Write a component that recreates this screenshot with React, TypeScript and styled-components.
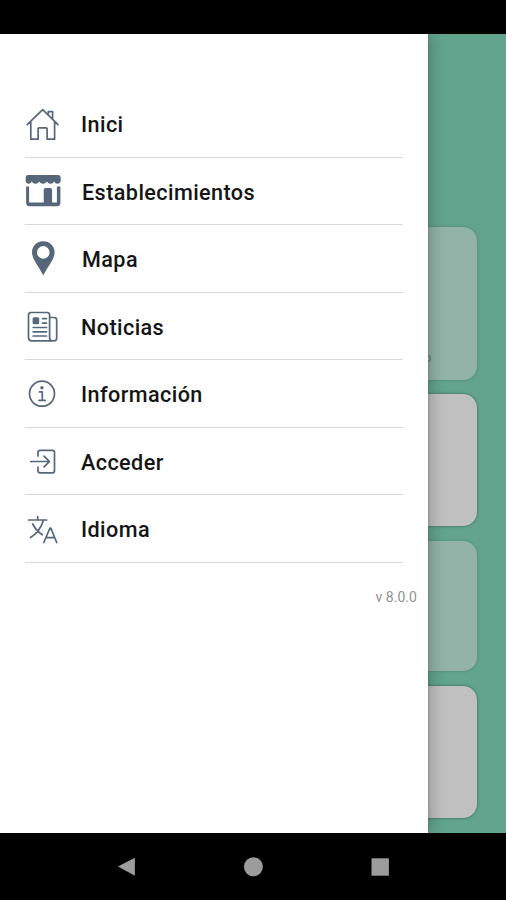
import React from 'react';
import styled, { createGlobalStyle } from 'styled-components';

const Global = createGlobalStyle`
  *, *::before, *::after { box-sizing: border-box; }
  body { margin: 0; background: #000; font-family: Roboto, sans-serif; }
`;

const Screen = styled.div`
  display: flex;
  flex-direction: column;
  width: 506px;
  height: 900px;
  overflow: hidden;
  background: #000;
`;

const StatusBar = styled.header`
  height: 34px;
  flex: none;
  background: #000;
`;

const Body = styled.div`
  display: flex;
  flex: none;
  height: 799px;
  background: #63a48e;
  overflow: hidden;
`;

const Drawer = styled.aside`
  position: relative;
  z-index: 1;
  display: flex;
  flex-direction: column;
  flex: none;
  width: 428px;
  padding: 56.25px 25px 0;
  background: #fff;
  box-shadow: 0 0 17px rgba(0, 0, 0, 0.32), 0 0 2px rgba(0, 0, 0, 0.2);
`;

const Menu = styled.nav`
  display: flex;
  flex-direction: column;
  width: 378px;
`;

const MenuItem = styled.a`
  display: flex;
  align-items: center;
  height: 67.5px;
  border-bottom: 1px solid #d9d9d9;
  color: #151515;
`;

const Icon = styled.svg`
  display: block;
  flex: none;
  width: 36px;
  height: 36px;
  color: #56677b;
  fill: none;
  stroke: currentColor;
  stroke-width: 1.7;
  stroke-linecap: round;
  stroke-linejoin: round;
`;

const Label = styled.span<{ $indent: number }>`
  margin-left: ${(p) => p.$indent}px;
  padding-top: 3px;
  font-size: 21.6px;
  font-weight: 500;
  line-height: 26px;
  letter-spacing: 0.42px;
  white-space: nowrap;
`;

const Version = styled.div`
  align-self: flex-end;
  margin: 25px -14px 0 0;
  color: #929292;
  font-size: 14px;
  line-height: 18px;
  letter-spacing: 0.05px;
`;

const Backdrop = styled.main`
  display: flex;
  flex-direction: column;
  flex: 1;
  padding: 193px 29px 0 0;
`;

const Card = styled.section<{ $height: number; $gap: number; $muted?: boolean }>`
  display: flex;
  align-items: flex-end;
  flex: none;
  height: ${(p) => p.$height}px;
  margin-bottom: ${(p) => p.$gap}px;
  padding-bottom: 14px;
  border-radius: 0 14px 14px 0;
  background: ${(p) => (p.$muted ? '#93b3a8' : '#c0c0c0')};
  box-shadow: 0 0 3px ${(p) => (p.$muted ? 'rgba(0,55,35,.28)' : 'rgba(0,45,30,.55)')};
`;

const CardText = styled.span`
  margin-left: -4px;
  color: #6d7b77;
  font-size: 13px;
  line-height: 16px;
`;

const NavBar = styled.footer`
  display: flex;
  align-items: center;
  justify-content: space-between;
  flex: none;
  height: 67px;
  padding: 0 116px;
`;

const NavIcon = styled.svg`
  display: block;
  width: 20px;
  height: 20px;
  fill: #9c9c9c;
`;

const HomeIcon = () => (
  <Icon viewBox="0 0 36 36">
    <path d="M2.2 18.7 17.7 3.7 33 18.7M5.8 16v17.2h7.3V22.8q0-1 1-1h7q1 0 1 1v10.4h7.5V16M23.3 9V5.6h4.3v7.5" />
  </Icon>
);

const StoreIcon = () => (
  <Icon viewBox="0 0 36 36">
    <path
      d="M3 2h30q2.7 0 2.7 3v3.4q-1 2.4-3.3 2.4t-3.2-2.2q-1.3 2.2-3.7 2.2T21.8 8.6q-1.4 2.2-3.8 2.2t-3.8-2.2q-1.3 2.2-3.7 2.2T6.8 8.6Q5.7 10.8 3.6 10.8T.7 8.4V5Q.7 2 3 2Z"
      fill="currentColor"
      stroke="none"
    />
    <path
      d="M1.1 13.4h3v16.1h14.6V17q0-2 2-2h4.4q2 0 2 2v12.5h4.8V13.4h3.5v16.2q0 3.7-3.3 3.7H4.3q-3.2 0-3.2-3.7Z"
      fill="currentColor"
      stroke="none"
    />
  </Icon>
);

const PinIcon = () => (
  <Icon viewBox="0 0 36 36">
    <path
      fillRule="evenodd"
      d="M18.3.2c6.4 0 11.3 4.8 11.3 11 0 7.3-7 14.3-11.3 23.2C14 25.5 7 18.5 7 11.2 7 5 11.9.2 18.3.2Zm0 4.9a6.3 6.3 0 1 0 0 12.6 6.3 6.3 0 0 0 0-12.6Z"
      fill="currentColor"
      stroke="none"
    />
  </Icon>
);

const NewsIcon = () => (
  <Icon viewBox="0 0 36 36">
    <path d="M24.6 9.5h4.6q2.5 0 2.5 2.5v18.2a2.6 2.6 0 0 1-2.6 2.6H6.5q-3 0-3-3V7q0-2.500 2.500-2.500h16q2.600 0 2.600 2.500v22.500q0 3 2.300 3.300" />
    <path d="M17.5 10.600h4M17.5 15.200h4M8.200 19.500h13.300M8.200 23.900h13.300M8.200 28h13.300" />
    <rect x="7.6" y="9.2" width="6.6" height="7" rx="1.5" fill="currentColor" stroke="none" />
  </Icon>
);

const InfoIcon = () => (
  <Icon viewBox="0 0 36 36">
    <circle cx="17" cy="17.7" r="12.5" />
    <circle cx="16.9" cy="11.8" r="1.7" fill="currentColor" stroke="none" />
    <path d="M14.5 15.9h2.8v8.4M14 24.4h6.2" />
  </Icon>
);

const LoginIcon = () => (
  <Icon viewBox="0 0 36 36">
    <path d="M13 13V9.300q0-2 2-2h12.500q2 0 2 2v18.500q0 2-2 2H15q-2 0-2-2V24M5.700 18.500h18.700M19 13.100l5.500 5.400-5.500 5.400" />
  </Icon>
);

const LanguageIcon = () => (
  <Icon viewBox="0 0 36 36">
    <path d="M3.700 9h18M12.700 5.600V9M18.300 9.500C16.100 17 11.500 22.800 5.500 26.500M7.700 13c2.300 4.500 5.600 8.200 9.600 10.800M18.800 31.500 25 17h.8l5.900 14.500M21 26.700h8.700" />
  </Icon>
);

const items = [
  { label: 'Inici', icon: HomeIcon, indent: 20 },
  { label: 'Establecimientos', icon: StoreIcon, indent: 21 },
  { label: 'Mapa', icon: PinIcon, indent: 21 },
  { label: 'Noticias', icon: NewsIcon, indent: 20 },
  { label: 'Información', icon: InfoIcon, indent: 20 },
  { label: 'Acceder', icon: LoginIcon, indent: 20 },
  { label: 'Idioma', icon: LanguageIcon, indent: 20 },
];

export default function App() {
  return (
    <>
      <Global />
      <Screen>
        <StatusBar />
        <Body>
          <Drawer>
            <Menu>
              {items.map(({ label, icon: Glyph, indent }) => (
                <MenuItem key={label}>
                  <Glyph />
                  <Label $indent={indent}>{label}</Label>
                </MenuItem>
              ))}
            </Menu>
            <Version>v 8.0.0</Version>
          </Drawer>
          <Backdrop>
            <Card $height={153} $gap={14} $muted>
              <CardText>o</CardText>
            </Card>
            <Card $height={132} $gap={15} />
            <Card $height={130} $gap={14.5} $muted />
            <Card $height={132} $gap={0} />
          </Backdrop>
        </Body>
        <NavBar>
          <NavIcon viewBox="0 0 20 20">
            <path d="M2 9.6 18.900.8v18Z" />
          </NavIcon>
          <NavIcon viewBox="0 0 20 20">
            <circle cx="10.4" cy="9.8" r="9.5" />
          </NavIcon>
          <NavIcon viewBox="0 0 20 20">
            <rect x="1.500" y="1.300" width="17.400" height="17.400" />
          </NavIcon>
        </NavBar>
      </Screen>
    </>
  );
}
